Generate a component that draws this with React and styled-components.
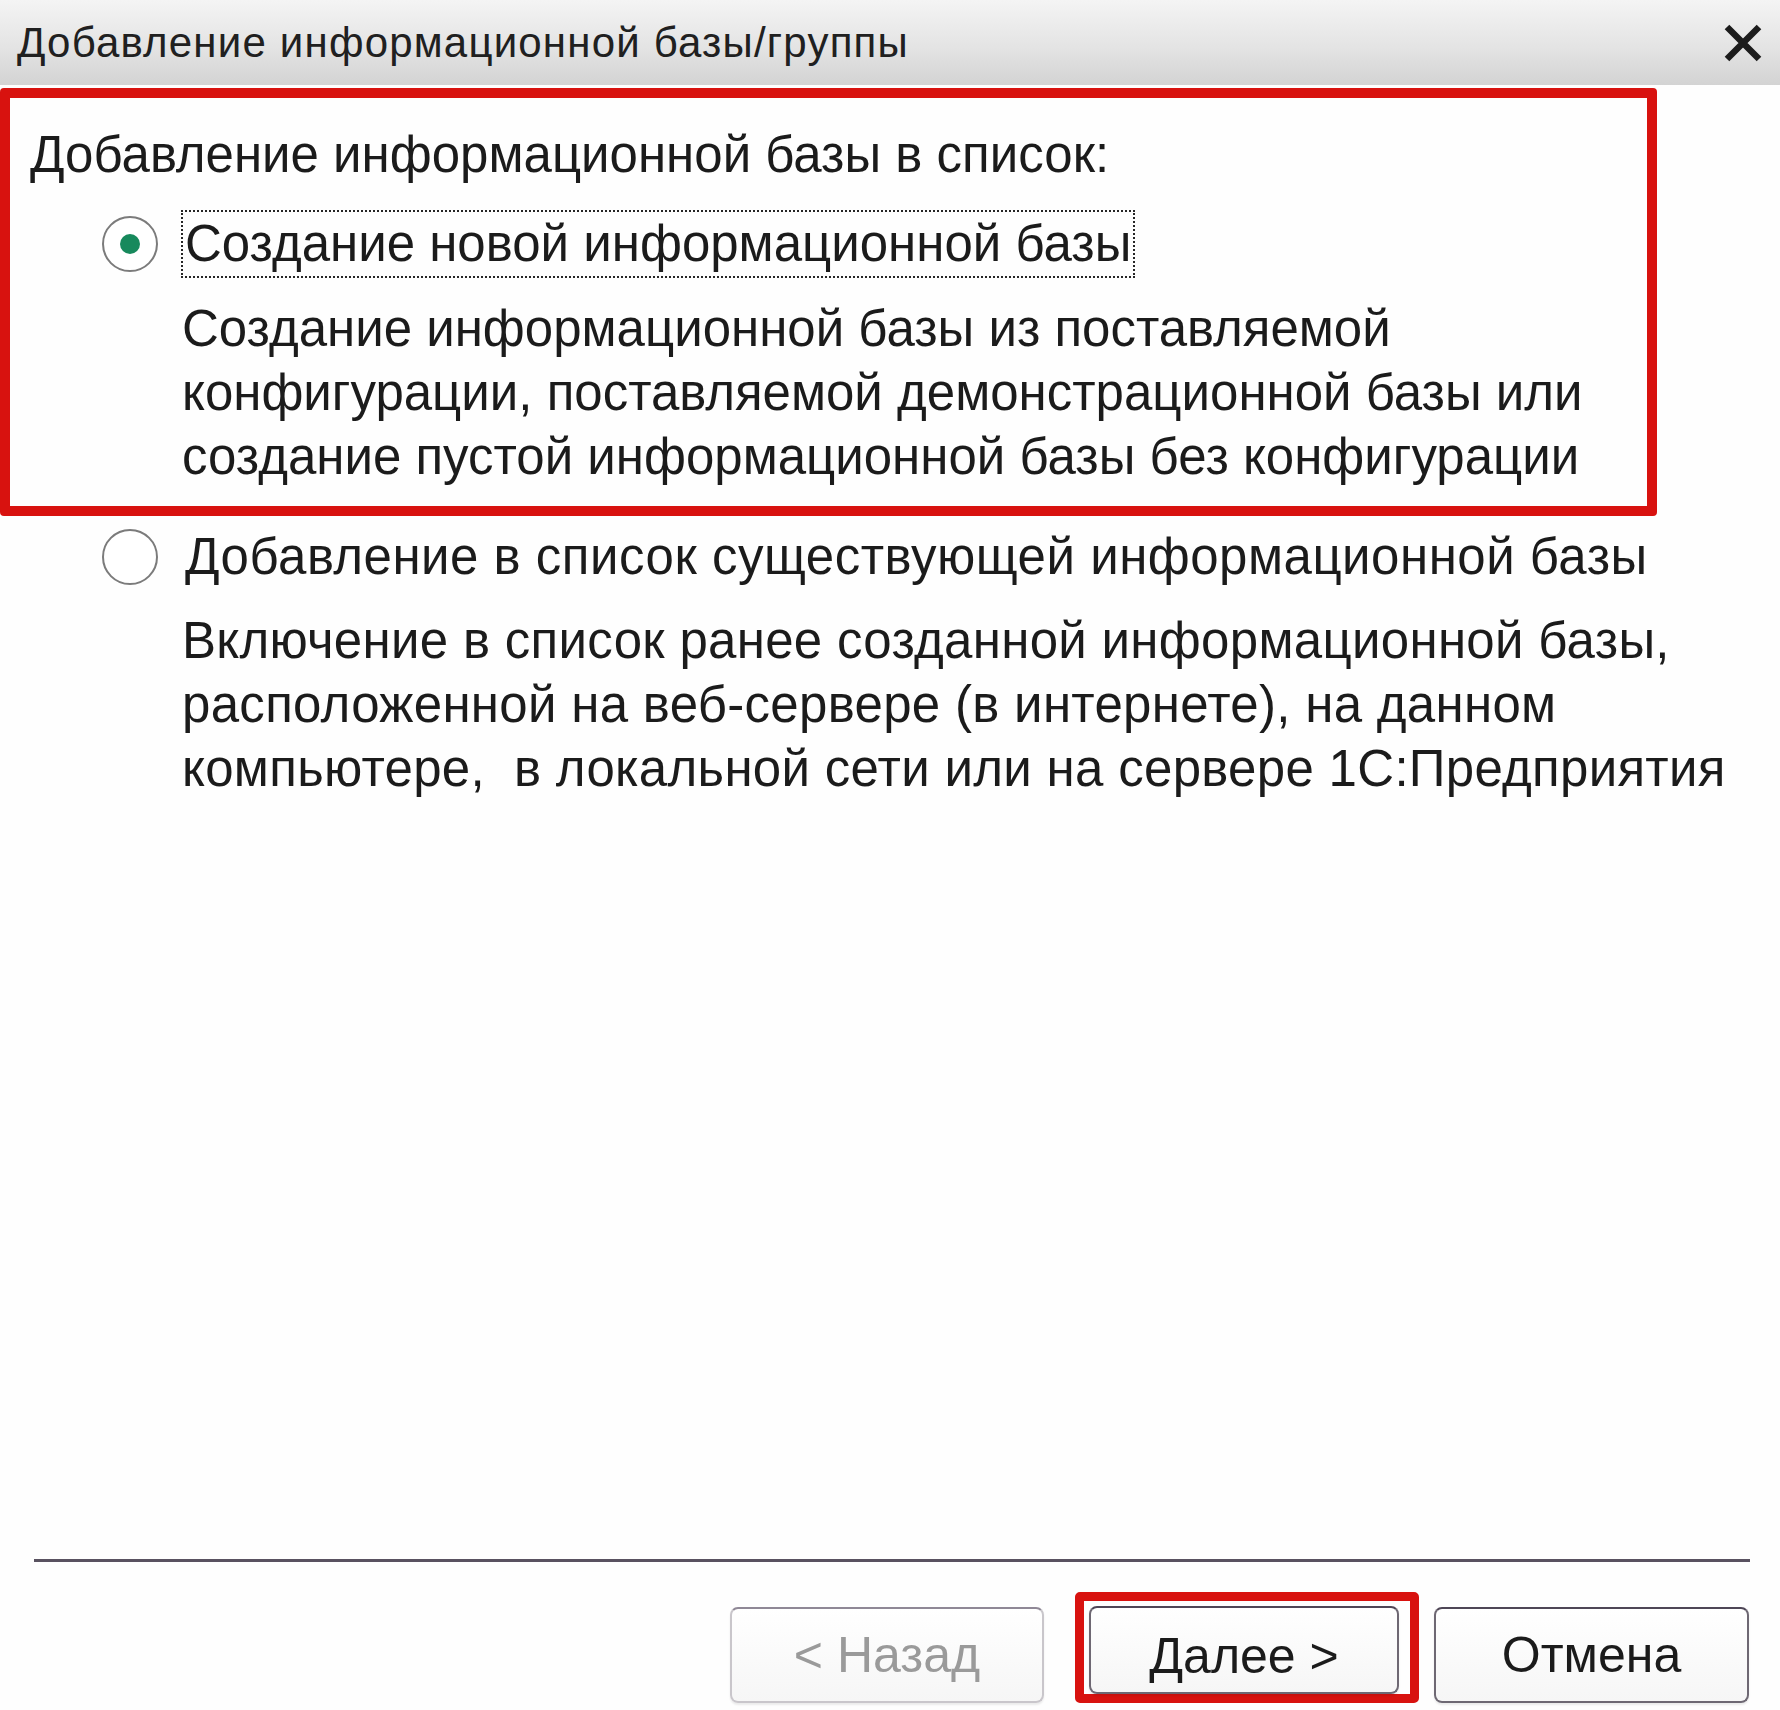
import React, { useState } from "react";
import styled, { createGlobalStyle } from "styled-components";

const GlobalStyle = createGlobalStyle`
  html, body {
    margin: 0;
    padding: 0;
    background: #ffffff;
  }
  body {
    font-family: "Liberation Sans", Arial, sans-serif;
    color: #1b1b1b;
  }
`;

const Window = styled.div`
  width: 1780px;
  height: 1710px;
  display: flex;
  flex-direction: column;
  background: #fefefe;
  overflow: hidden;
`;

const TitleBar = styled.div`
  height: 85px;
  flex: none;
  display: flex;
  align-items: center;
  justify-content: space-between;
  padding: 0 17px;
  box-sizing: border-box;
  background: linear-gradient(#f4f4f4 0%, #e4e4e4 55%, #d3d3d3 100%);
`;

const Title = styled.div`
  font-size: 42px;
  letter-spacing: 1.2px;
  color: #202020;
  white-space: nowrap;
`;

const CloseButton = styled.button`
  width: 40px;
  height: 38px;
  padding: 0;
  border: none;
  background: transparent;
  display: flex;
  align-items: center;
  justify-content: center;
  cursor: pointer;
`;

const Content = styled.div`
  flex: 1;
  padding-top: 3px;
`;

const Section = styled.div`
  width: ${(p) => (p.$highlight ? "1657px" : "auto")};
  box-sizing: border-box;
  border: 10px solid ${(p) => (p.$highlight ? "#d8120f" : "transparent")};
  border-radius: 4px;
  padding: ${(p) => p.$pad};
  margin-top: ${(p) => p.$shift || "0"};
`;

const Heading = styled.div`
  font-size: 51px;
  line-height: 64px;
  padding-left: 20px;
  margin-bottom: 23px;
  white-space: nowrap;
`;

const OptionRow = styled.label`
  display: flex;
  align-items: center;
  padding-left: 92px;
  cursor: pointer;
`;

const RadioCircle = styled.span`
  width: 56px;
  height: 56px;
  flex: none;
  box-sizing: border-box;
  border-radius: 50%;
  border: 2.5px solid #7b7b7b;
  background: #ffffff;
  display: flex;
  align-items: center;
  justify-content: center;
  margin-right: 23px;

  &::after {
    content: "";
    width: 20px;
    height: 20px;
    border-radius: 50%;
    background: #17895c;
    display: ${(p) => (p.$checked ? "block" : "none")};
  }
`;

const OptionLabel = styled.span`
  font-size: 51px;
  line-height: 64px;
  padding: 0 2px;
  letter-spacing: ${(p) => p.$spacing || "0"};
  border: 2px dotted ${(p) => (p.$focused ? "#262626" : "transparent")};
  white-space: nowrap;
`;

const Description = styled.div`
  font-size: 51px;
  line-height: 64px;
  margin-left: 172px;
  margin-top: ${(p) => p.$top};
  letter-spacing: ${(p) => p.$spacing || "0"};
  white-space: pre;
`;

const Footer = styled.div`
  flex: none;
  padding: 0 31px 7px 34px;
`;

const Separator = styled.div`
  height: 3px;
  background: #595260;
  margin-right: -1px;
`;

const ButtonRow = styled.div`
  display: flex;
  justify-content: flex-end;
  align-items: flex-end;
  margin-top: 30px;
`;

const Button = styled.button`
  width: ${(p) => p.$w || "314px"};
  height: ${(p) => p.$h || "96px"};
  box-sizing: border-box;
  font-family: "Liberation Sans", Arial, sans-serif;
  font-size: 50px;
  color: ${(p) => (p.disabled ? "#9a9a9a" : "#1b1b1b")};
  background: linear-gradient(#ffffff, #f6f6f6);
  border: 2px solid ${(p) => (p.disabled ? "#c9c6cb" : "#6e6873")};
  border-top-color: ${(p) => (p.disabled ? "#8f8896" : "#4e4656")};
  border-radius: 8px;
  box-shadow: 0 2px 2px rgba(0, 0, 0, 0.08);
  padding: ${(p) => p.$padTop || "0"} 0 0 0;
  cursor: ${(p) => (p.disabled ? "default" : "pointer")};
`;

const Highlight = styled.div`
  border: 9px solid #d8120f;
  border-radius: 5px;
  padding: 5px 11px 0 5px;
  margin: 0 15px 0 31px;
  display: flex;
`;

const CloseIcon = () => (
  <svg width="40" height="38" viewBox="0 0 40 38">
    <path d="M4 3 L36 35 M36 3 L4 35" stroke="#1c1c1c" strokeWidth="6.5" strokeLinecap="butt" />
  </svg>
);

export default function App() {
  const [mode, setMode] = useState("create");

  return (
    <>
      <GlobalStyle />
      <Window>
        <TitleBar>
          <Title>Добавление информационной базы/группы</Title>
          <CloseButton aria-label="Закрыть">
            <CloseIcon />
          </CloseButton>
        </TitleBar>

        <Content>
          <Section $highlight $pad="25px 0 17px 0">
            <Heading>Добавление информационной базы в список:</Heading>
            <OptionRow onClick={() => setMode("create")}>
              <RadioCircle $checked={mode === "create"} />
              <OptionLabel $focused={mode === "create"}>Создание новой информационной базы</OptionLabel>
            </OptionRow>
            <Description $top="19px">
              {"Создание информационной базы из поставляемой\nконфигурации, поставляемой демонстрационной базы или\nсоздание пустой информационной базы без конфигурации"}
            </Description>
          </Section>

          <Section $pad="0" $shift="-3px">
            <OptionRow onClick={() => setMode("add")}>
              <RadioCircle $checked={mode === "add"} />
              <OptionLabel $focused={mode === "add"} $spacing="0.5px">
                Добавление в список существующей информационной базы
              </OptionLabel>
            </OptionRow>
            <Description $top="18px" $spacing="0.3px">
              {"Включение в список ранее созданной информационной базы,\nрасположенной на веб-сервере (в интернете), на данном\nкомпьютере,  в локальной сети или на сервере 1С:Предприятия"}
            </Description>
          </Section>
        </Content>

        <Footer>
          <Separator />
          <ButtonRow>
            <Button disabled>&lt; Назад</Button>
            <Highlight>
              <Button $w="310px" $h="88px" $padTop="12px">Далее &gt;</Button>
            </Highlight>
            <Button $w="315px">Отмена</Button>
          </ButtonRow>
        </Footer>
      </Window>
    </>
  );
}
